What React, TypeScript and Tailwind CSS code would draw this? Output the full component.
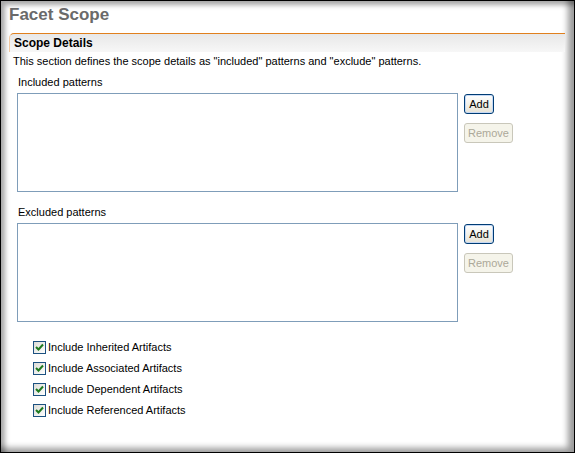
const FONT = "font-['Tahoma','Liberation_Sans',sans-serif]"

const CHECKS = [
  "Include Inherited Artifacts",
  "Include Associated Artifacts",
  "Include Dependent Artifacts",
  "Include Referenced Artifacts",
]

function XpButton({ label, disabled, width }: { label: string; disabled?: boolean; width: string }) {
  return (
    <button
      className={`${width} h-[20px] rounded-[3px] border text-[11px] leading-none flex items-center justify-center ${
        disabled
          ? "border-[#c9c7ba] bg-[#f5f4ea] text-[#aca899]"
          : "border-[#003c74] bg-gradient-to-b from-white to-[#e6e3d6] text-black shadow-[inset_0_0_0_1px_#c5d8f4]"
      }`}
    >
      {label}
    </button>
  )
}

function PatternBlock({ label }: { label: string }) {
  return (
    <div className="flex flex-col">
      <div className="h-[16px] pl-[17px] text-[11px] text-black leading-[16px]">{label}</div>
      <div className="flex mt-[3px]">
        <div className="ml-[16px] w-[441px] h-[99px] border border-[#7f9db9] bg-white" />
        <div className="ml-[6px] flex flex-col gap-[9px] pt-[1px]">
          <XpButton label="Add" width="w-[30px]" />
          <XpButton label="Remove" disabled width="w-[49px]" />
        </div>
      </div>
    </div>
  )
}

function Check({ label }: { label: string }) {
  return (
    <div className="flex items-center h-[21px]">
      <div className="w-[13px] h-[13px] border border-[#1c5180] bg-gradient-to-br from-[#dcdcd7] to-white flex items-center justify-center">
        <svg width="9" height="9" viewBox="0 0 9 9">
          <path d="M1 4 L3.5 6.5 L8 1.5" stroke="#1e7a1e" strokeWidth="2" fill="none" />
        </svg>
      </div>
      <span className="ml-[2px] text-[11px] text-black">{label}</span>
    </div>
  )
}

export default function App() {
  return (
    <div className={`w-[575px] h-[453px] bg-black p-px ${FONT}`}>
      <div className="w-full h-full bg-white shadow-[inset_5px_5px_5px_-1px_rgba(0,0,0,0.35),inset_-7px_-5px_6px_-1px_rgba(0,0,0,0.4)] flex flex-col">
        <div className="pl-[8px] pt-[3px] h-[32px] text-[17px] font-bold text-[#6a6a6a] leading-[22px]">Facet Scope</div>

        <div className="ml-[8px] mr-[9px] h-[19px] rounded-tl-[5px] border-t border-l border-[#e0801e] border-l-[#f2c8a0] bg-gradient-to-b from-[#e8e8e8] to-[#f7f7f7] pl-[4px] text-[12px] font-bold text-black leading-[19px]">
          Scope Details
        </div>

        <div className="pl-[12px] h-[18px] text-[11px] text-black leading-[18px]">
          This section defines the scope details as "included" patterns and "exclude" patterns.
        </div>

        <div className="mt-[4px]">
          <PatternBlock label="Included patterns" />
        </div>
        <div className="mt-[12px]">
          <PatternBlock label="Excluded patterns" />
        </div>

        <div className="mt-[15px] pl-[32px] flex flex-col">
          {CHECKS.map(c => (
            <Check key={c} label={c} />
          ))}
        </div>
      </div>
    </div>
  )
}
